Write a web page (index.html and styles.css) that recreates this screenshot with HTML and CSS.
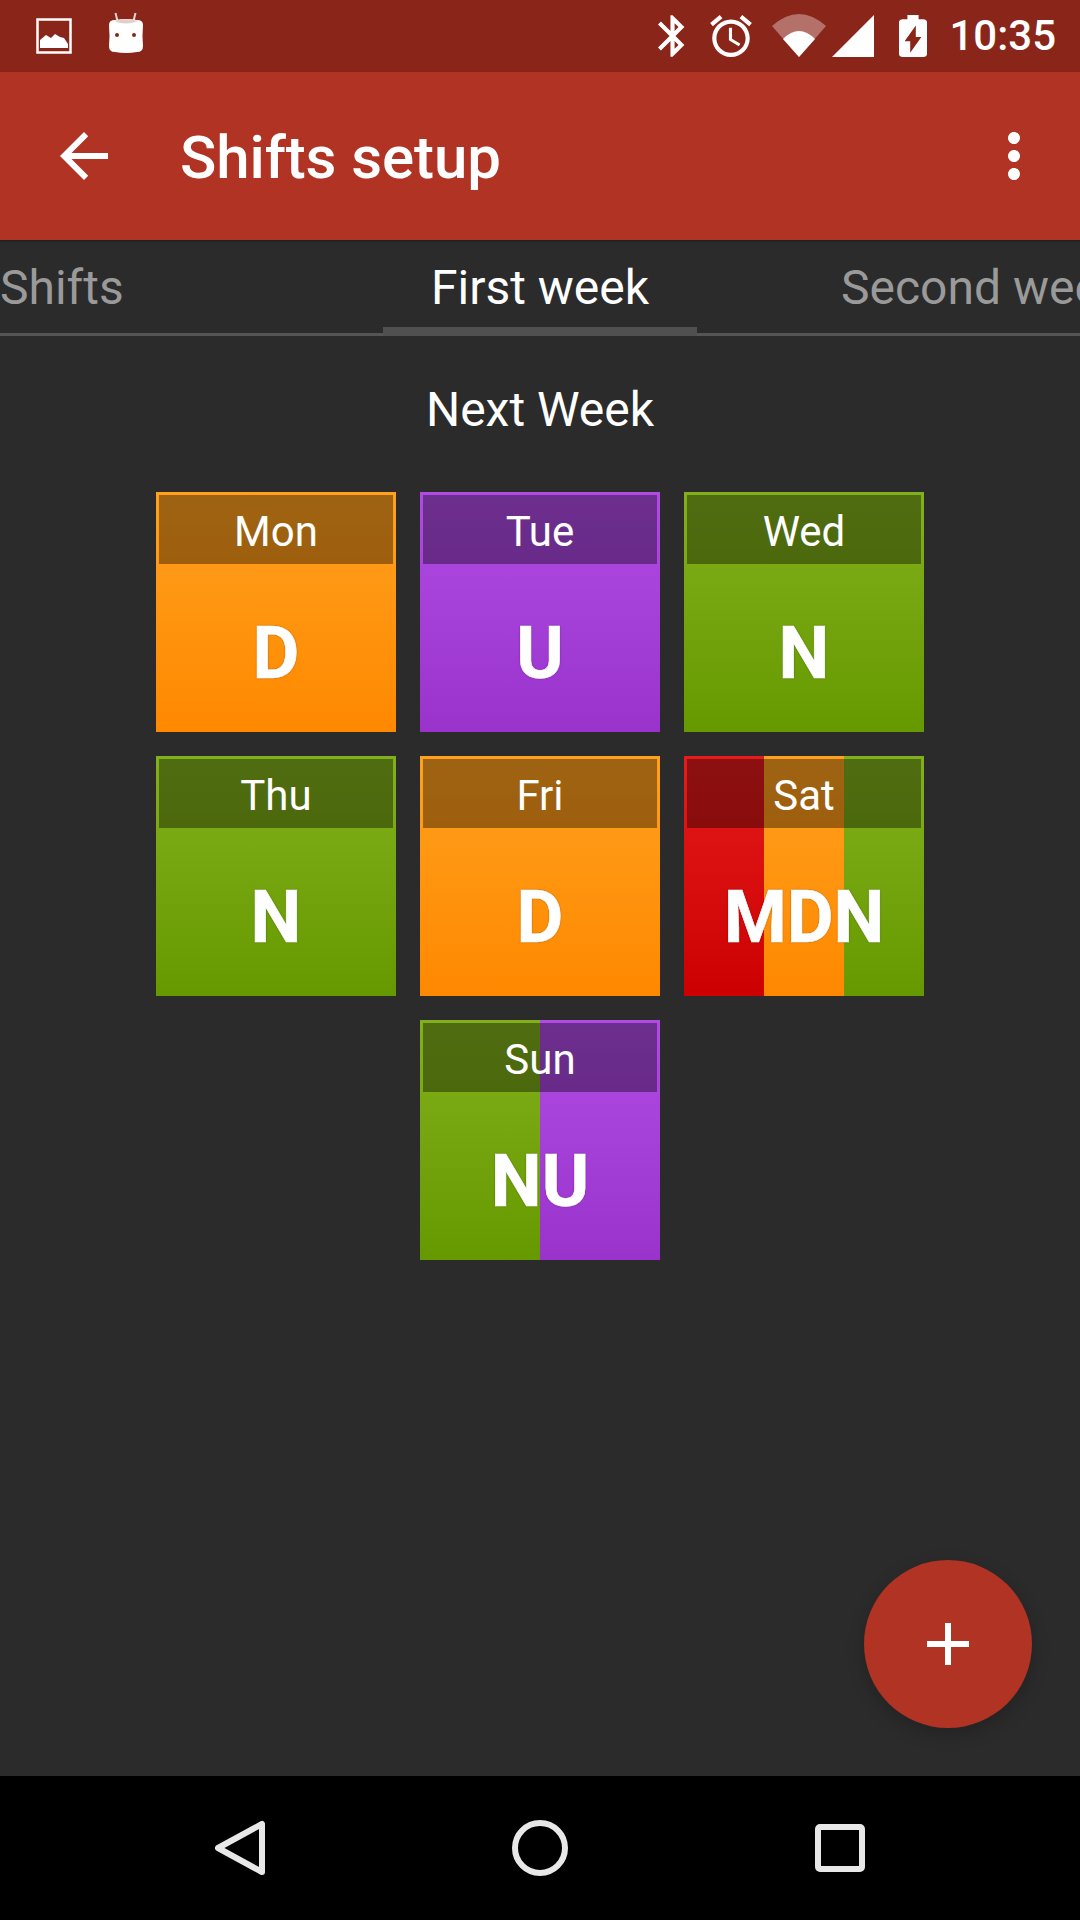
FILE: index.html
```html
<!DOCTYPE html>
<html lang="en">
<head>
    <meta charset="UTF-8" />
    <title>Shifts setup</title>
    <link rel="stylesheet" href="styles.css">
</head>
<body>
    <div class="screen">
        <div class="status-bar">
            <div class="status-left">
                <svg class="ic-image" viewBox="0 0 36 36">
                    <rect x="1.5" y="1.5" width="33" height="33" fill="none" stroke="#fff" stroke-width="2.5" />
                    <path d="M4 30V22L10 17L15 20L19 16L24 19L28 20L32 26V30z" fill="#fff" />
                </svg>
                <svg class="ic-android" viewBox="0 0 36 44">
                    <path d="M7.500 2l2 8M27.500 2l-2 8" stroke="#e6d6d3" stroke-width="2" fill="none" />
                    <path d="M7 9Q18 7 29 9Q35 9 35 14Q34 25 35 35Q35 41 29 41Q18 43 7 41Q1 41 1 35Q2 25 1 14Q1 9 7 9z" fill="#fff" />
                    <path d="M6 10Q18 6.500 30 10Q18 15 6 10z" fill="#e0cfcc" />
                    <circle cx="9" cy="24" r="2" fill="#8a2619" />
                    <circle cx="26" cy="24" r="2" fill="#8a2619" />
                </svg>
            </div>
            <div class="status-right">
                <svg class="ic-bt" viewBox="5 2 13 20"><path fill="#fff" d="M17.71 7.71L12 2h-1v7.59L6.41 5 5 6.41 10.59 12 5 17.59 6.41 19 11 14.41V22h1l5.710-5.710-4.300-4.290 4.300-4.290zM13 5.830l1.880 1.880L13 9.590V5.830zm1.880 10.460L13 18.170v-3.760l1.880 1.880z" /></svg>
                <svg class="ic-alarm" viewBox="2 1.860 20 20.140"><path fill="#fff" d="M22 5.720l-4.600-3.860-1.290 1.530 4.600 3.860L22 5.720zM7.880 3.390L6.600 1.860 2 5.710l1.290 1.530 4.590-3.850zM12.500 8H11v6l4.750 2.850.75-1.230-4-2.370V8zM12 4c-4.970 0-9 4.030-9 9s4.020 9 9 9c4.970 0 9-4.030 9-9s-4.030-9-9-9zm0 16c-3.870 0-7-3.130-7-7s3.130-7 7-7 7 3.130 7 7-3.130 7-7 7z" /></svg>
                <svg class="ic-wifi" viewBox="0 0 54 44">
                    <path d="M0 12Q27 -12 54 12L27 43z" fill="#fff" fill-opacity="0.35" />
                    <path d="M11 25Q27 9 43 25L27 43z" fill="#fff" />
                </svg>
                <svg class="ic-signal" viewBox="0 0 42 42"><path d="M42 0V42H0z" fill="#fff" /></svg>
                <svg class="ic-battery" viewBox="7 2 10 20" preserveAspectRatio="none"><path fill="#fff" fill-rule="evenodd" d="M15.670 4H14V2h-4v2H8.330C7.600 4 7 4.600 7 5.330v15.340C7 21.400 7.600 22 8.330 22h7.340c.74 0 1.330-.6 1.330-1.330V5.330C17 4.600 16.400 4 15.670 4zM11 20v-5.500H9L13 7v5.500h2L11 20z" /></svg>
                <span class="clock">10:35</span>
            </div>
        </div>

        <div class="app-bar">
            <svg class="app-icon" viewBox="0 0 24 24"><path fill="#fff" d="M20 11H7.830l5.590-5.590L12 4l-8 8 8 8 1.410-1.410L7.830 13H20v-2z" /></svg>
            <div class="app-title">Shifts setup</div>
            <svg class="app-icon" viewBox="0 0 24 24"><path fill="#fff" d="M12 8c1.100 0 2-.9 2-2s-.9-2-2-2-2 .9-2 2 .9 2 2 2zm0 2c-1.100 0-2 .9-2 2s.9 2 2 2 2-.9 2-2-.9-2-2-2zm0 6c-1.100 0-2 .9-2 2s.9 2 2 2 2-.9 2-2-.9-2-2-2z" /></svg>
        </div>

        <div class="tabs">
            <div class="tab tab-first">Shifts</div>
            <div class="tab tab-active">First week</div>
            <div class="tab tab-last">Second week</div>
        </div>

        <div class="content">
            <div class="week-title">Next Week</div>
            <div class="week-grid">
                <div class="tile">
                    <div class="stripes"><div class="stripe day"></div></div>
                    <div class="tile-text">
                        <div class="tile-head">Mon</div>
                        <div class="tile-code">D</div>
                    </div>
                </div>
                <div class="tile">
                    <div class="stripes"><div class="stripe unit"></div></div>
                    <div class="tile-text">
                        <div class="tile-head">Tue</div>
                        <div class="tile-code">U</div>
                    </div>
                </div>
                <div class="tile">
                    <div class="stripes"><div class="stripe night"></div></div>
                    <div class="tile-text">
                        <div class="tile-head">Wed</div>
                        <div class="tile-code">N</div>
                    </div>
                </div>
                <div class="tile">
                    <div class="stripes"><div class="stripe night"></div></div>
                    <div class="tile-text">
                        <div class="tile-head">Thu</div>
                        <div class="tile-code">N</div>
                    </div>
                </div>
                <div class="tile">
                    <div class="stripes"><div class="stripe day"></div></div>
                    <div class="tile-text">
                        <div class="tile-head">Fri</div>
                        <div class="tile-code">D</div>
                    </div>
                </div>
                <div class="tile">
                    <div class="stripes">
                        <div class="stripe morning"></div>
                        <div class="stripe day"></div>
                        <div class="stripe night"></div>
                    </div>
                    <div class="tile-text">
                        <div class="tile-head">Sat</div>
                        <div class="tile-code">MDN</div>
                    </div>
                </div>
                <div class="tile tile-sun">
                    <div class="stripes">
                        <div class="stripe night"></div>
                        <div class="stripe unit"></div>
                    </div>
                    <div class="tile-text">
                        <div class="tile-head">Sun</div>
                        <div class="tile-code">NU</div>
                    </div>
                </div>
            </div>
            <button class="fab">
                <svg viewBox="0 0 42 42"><path d="M18 0h6v18h18v6H24v18h-6V24H0v-6h18z" fill="#fff" /></svg>
            </button>
        </div>

        <div class="nav-bar">
            <svg class="nav-icon" viewBox="0 0 60 60"><path d="M52 6V54L8 30z" fill="none" stroke="#e8e8e8" stroke-width="6" stroke-linejoin="round" /></svg>
            <svg class="nav-icon" viewBox="0 0 60 60"><circle cx="30" cy="30" r="25" fill="none" stroke="#e8e8e8" stroke-width="6" /></svg>
            <svg class="nav-icon" viewBox="0 0 60 60"><rect x="8" y="9" width="44" height="42" rx="2" fill="none" stroke="#e8e8e8" stroke-width="6" /></svg>
        </div>
    </div>
</body>
</html>
```

FILE: styles.css
```css
* {
    margin: 0;
    padding: 0;
    box-sizing: border-box;
}

body {
    width: 1080px;
    height: 1920px;
    overflow: hidden;
    font-family: Roboto, "Liberation Sans", sans-serif;
    color: #fff;
    background: #2b2b2b;
}

.screen {
    display: flex;
    flex-direction: column;
    height: 1920px;
}

.status-bar {
    flex: none;
    height: 72px;
    padding: 0 24px 0 36px;
    display: flex;
    align-items: center;
    justify-content: space-between;
    background: #8a2619;
}

.status-left {
    display: flex;
    align-items: center;
    gap: 36px;
}

.ic-image { width: 36px; height: 36px; }
.ic-android { width: 36px; height: 44px; margin-bottom: 6px; }

.status-right {
    display: flex;
    align-items: center;
}

.ic-bt { width: 27px; height: 42px; }
.ic-alarm { width: 42px; height: 42px; margin-left: 25px; }
.ic-wifi { width: 54px; height: 44px; margin-left: 20px; }
.ic-signal { width: 42px; height: 42px; margin-left: 6px; }
.ic-battery { width: 28px; height: 42px; margin-left: 25px; }

.clock {
    margin-left: 22px;
    font-size: 42px;
    font-weight: 500;
    line-height: 72px;
}

.app-bar {
    flex: none;
    position: relative;
    height: 168px;
    padding: 0 30px 0 48px;
    display: flex;
    align-items: center;
    background: #b03323;
    box-shadow: 0 1px 2px rgba(0, 0, 0, 0.4);
}

.app-icon {
    width: 72px;
    height: 72px;
    flex: none;
}

.app-title {
    flex: 1;
    margin: 2px 0 0 60px;
    font-size: 60px;
    font-weight: 500;
    letter-spacing: -0.1px;
}

.tabs {
    flex: none;
    height: 96px;
    display: flex;
    overflow: hidden;
    font-size: 48px;
    white-space: nowrap;
    color: #9a9a9a;
}

.tab {
    flex: none;
    line-height: 95px;
    border-bottom: 3px solid #555;
}

.tab-first { width: 383px; }

.tab-active {
    width: 314px;
    text-align: center;
    color: #fff;
    border-bottom: 9px solid #505050;
}

.tab-last {
    flex: 1;
    padding-left: 144px;
}

.content {
    flex: 1;
    position: relative;
    display: flex;
    flex-direction: column;
    align-items: center;
    background: #2b2b2b;
}

.week-title {
    margin-top: 46px;
    font-size: 48px;
    line-height: 56px;
}

.week-grid {
    margin-top: 54px;
    display: grid;
    grid-template-columns: repeat(3, 240px);
    grid-auto-rows: 240px;
    gap: 24px;
}

.tile {
    display: grid;
}

.tile-sun { grid-column: 2; }

.stripes {
    grid-area: 1 / 1;
    display: flex;
}

.stripe { flex: 1; }

.day { background: linear-gradient(#ffa11f, #ff8800); }
.unit { background: linear-gradient(#b04ce4, #9933cc); }
.night { background: linear-gradient(#82b01c, #669900); }
.morning { background: linear-gradient(#e51c1c, #cc0000); }

.tile-text {
    grid-area: 1 / 1;
    display: flex;
    flex-direction: column;
}

.tile-head {
    height: 69px;
    margin: 3px 3px 0;
    font-size: 42px;
    line-height: 73px;
    text-align: center;
    background: rgba(0, 0, 0, 0.38);
}

.tile-code {
    flex: 1;
    padding-top: 10px;
    display: flex;
    align-items: center;
    justify-content: center;
    font-size: 72px;
    font-weight: 700;
    -webkit-text-stroke: 0.6px #fff;
    text-shadow: 0 0 2px rgba(0, 0, 0, 0.45);
}

.fab {
    position: absolute;
    right: 48px;
    bottom: 48px;
    width: 168px;
    height: 168px;
    display: flex;
    align-items: center;
    justify-content: center;
    border: none;
    border-radius: 50%;
    background: #b03323;
    box-shadow: 0 6px 18px rgba(0, 0, 0, 0.2);
}

.fab svg {
    width: 42px;
    height: 42px;
}

.nav-bar {
    flex: none;
    height: 144px;
    padding: 0 90px;
    display: grid;
    grid-template-columns: repeat(3, 300px);
    align-items: center;
    justify-items: center;
    background: #000;
}

.nav-icon {
    width: 60px;
    height: 60px;
}
```
